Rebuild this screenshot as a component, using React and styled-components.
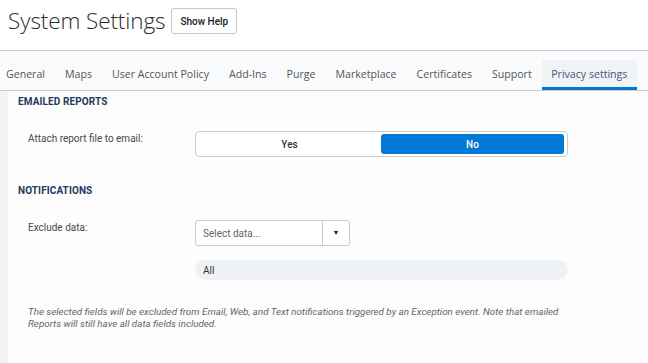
import React from "react";
import styled, { createGlobalStyle } from "styled-components";

const Global = createGlobalStyle`
  html, body { margin: 0; padding: 0; background: #fdfdfd; }
  body { font-family: Roboto, "Liberation Sans", sans-serif; }
  * { box-sizing: border-box; }
`;

const Page = styled.div`
  width: 648px;
  height: 363px;
  overflow: hidden;
  background: #fdfdfd;
`;

const Header = styled.header`
  height: 51px;
  background: #fff;
  border-bottom: 1px solid #c9ced6;
  display: flex;
  align-items: center;
  gap: 6px;
  padding: 0 0 10px 8px;
`;

const Title = styled.h1`
  margin: 0;
  font-family: "Open Sans", sans-serif;
  font-weight: 300;
  font-size: 22.5px;
  color: #2b2b2b;
  letter-spacing: -0.1px;
`;

const HelpButton = styled.button`
  height: 26px;
  padding: 0 8px;
  border: 1px solid #c8c8c8;
  border-radius: 3px;
  background: #fff;
  font-family: Roboto, sans-serif;
  font-size: 10px;
  font-weight: 500;
  color: #222;
  margin-top: 2px;
`;

const TabBar = styled.nav`
  height: 40px;
  background: #fafbfc;
  border-bottom: 1px solid #c9ced6;
  display: flex;
  align-items: flex-end;
  margin-left: -4px;
`;

const Tab = styled.div`
  height: 30px;
  padding: 1px ${(p) => (p.$active ? "9.5px" : "10px")} 0;
  display: flex;
  align-items: center;
  font-family: "Open Sans", sans-serif;
  font-size: 10.6px;
  color: ${(p) => (p.$active ? "#44557a" : "#555")};
  background: ${(p) => (p.$active ? "#f1f3f6" : "transparent")};
  border-bottom: 3px solid ${(p) => (p.$active ? "#0078d4" : "transparent")};
  white-space: nowrap;
`;

const Content = styled.main`
  display: flex;
  height: 272px;
`;

const Edge = styled.div`
  width: 8px;
  background: #f4f4f4;
`;

const Body = styled.div`
  flex: 1;
  padding: 5px 0 0 10px;
`;

const SectionTitle = styled.h2`
  margin: 0 0 ${(p) => p.$gap}px;
  font-size: 10px;
  font-weight: 700;
  color: #233a5c;
  letter-spacing: 0.1px;
  line-height: 12px;
`;

const Row = styled.div`
  display: grid;
  grid-template-columns: 167px 373px;
  padding-left: 10px;
  margin-bottom: ${(p) => p.$mb}px;
`;

const Label = styled.div`
  font-size: 10px;
  color: #4a4a4a;
  padding-top: ${(p) => p.$pt}px;
`;

const Toggle = styled.div`
  display: grid;
  grid-template-columns: 1fr 1fr;
  height: 26px;
  border: 1px solid #c8ccd2;
  border-radius: 4px;
  padding: 2px 3px 2px 2px;
  background: #fff;
`;

const ToggleOption = styled.div`
  display: flex;
  align-items: center;
  justify-content: center;
  border-radius: 3px;
  font-size: 10px;
  font-weight: 500;
  color: ${(p) => (p.$on ? "#fff" : "#333")};
  background: ${(p) => (p.$on ? "#0078d4" : "transparent")};
`;

const Controls = styled.div`
  display: flex;
  flex-direction: column;
  gap: 14px;
`;

const Select = styled.div`
  width: 155px;
  height: 26px;
  border: 1px solid #c8ccd2;
  border-radius: 3px;
  background: #fff;
  display: flex;
`;

const SelectText = styled.div`
  flex: 1;
  display: flex;
  align-items: center;
  padding-left: 7px;
  font-size: 10px;
  color: #666;
`;

const SelectArrow = styled.div`
  width: 27px;
  border-left: 1px solid #c8ccd2;
  display: flex;
  align-items: center;
  justify-content: center;
  font-size: 7px;
  color: #222;
`;

const Pill = styled.div`
  width: 373px;
  height: 20px;
  border-radius: 10px;
  background: #eef1f5;
  display: flex;
  align-items: center;
  padding-left: 8px;
  font-size: 10px;
  color: #333;
`;

const Note = styled.p`
  margin: 0;
  padding-left: 10px;
  font-size: 9.8px;
  font-style: italic;
  line-height: 12px;
  color: #666;
  width: 545px;
`;

const tabs = [
  "General",
  "Maps",
  "User Account Policy",
  "Add-Ins",
  "Purge",
  "Marketplace",
  "Certificates",
  "Support",
  "Privacy settings",
];

export default function App() {
  return (
    <Page>
      <Global />
      <Header>
        <Title>System Settings</Title>
        <HelpButton>Show Help</HelpButton>
      </Header>
      <TabBar>
        {tabs.map((t) => (
          <Tab key={t} $active={t === "Privacy settings"}>
            {t}
          </Tab>
        ))}
      </TabBar>
      <Content>
        <Edge />
        <Body>
          <SectionTitle $gap={23}>EMAILED REPORTS</SectionTitle>
          <Row $mb={28}>
            <Label $pt={2}>Attach report file to email:</Label>
            <Toggle>
              <ToggleOption>Yes</ToggleOption>
              <ToggleOption $on>No</ToggleOption>
            </Toggle>
          </Row>
          <SectionTitle $gap={23}>NOTIFICATIONS</SectionTitle>
          <Row $mb={26}>
            <Label $pt={2}>Exclude data:</Label>
            <Controls>
              <Select>
                <SelectText>Select data...</SelectText>
                <SelectArrow>▼</SelectArrow>
              </Select>
              <Pill>All</Pill>
            </Controls>
          </Row>
          <Note>
            The selected fields will be excluded from Email, Web, and Text
            notifications triggered by an Exception event. Note that emailed
            Reports will still have all data fields included.
          </Note>
        </Body>
      </Content>
    </Page>
  );
}
